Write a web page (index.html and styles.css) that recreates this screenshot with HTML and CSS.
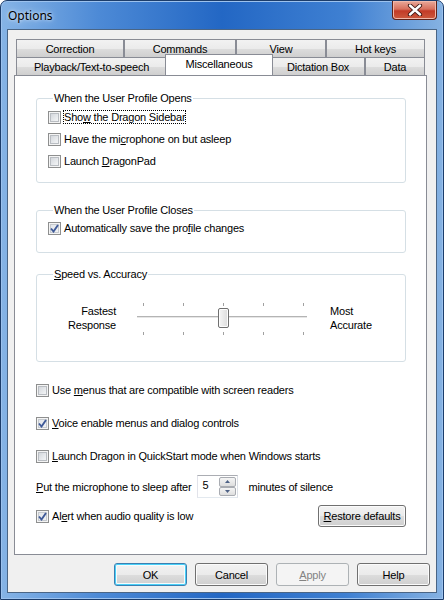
FILE: index.html
```html
<!DOCTYPE html>
<html lang="en">
<head>
<meta charset="UTF-8">
<title>Options</title>
<link rel="stylesheet" href="styles.css">
</head>
<body>
<div class="window">
  <div class="titlebar">
    <span class="title">Options</span>
    <span class="close-btn">
      <svg width="16" height="12" viewBox="0 0 16 12"><path d="M3 1.5 L13 10.5 M13 1.5 L3 10.5" stroke="#3a1410" stroke-width="4.2" stroke-linecap="round"/><path d="M3 1.5 L13 10.5 M13 1.5 L3 10.5" stroke="#fff" stroke-width="2.4" stroke-linecap="round"/></svg>
    </span>
  </div>
  <div class="client">
    <div class="tab-control">
      <div class="tab-row">
        <div class="tab" style="width:108px">Correction</div>
        <div class="tab" style="width:112px">Commands</div>
        <div class="tab" style="width:90px">View</div>
        <div class="tab" style="width:99px">Hot keys</div>
      </div>
      <div class="tab-row">
        <div class="tab" style="width:151px">Playback/Text-to-speech</div>
        <div class="tab selected" style="width:108px">Miscellaneous</div>
        <div class="tab" style="width:94px">Dictation Box</div>
        <div class="tab" style="width:60px">Data</div>
      </div>
      <div class="panel">
        <fieldset class="group group-opens">
          <legend>When the User Profile Opens</legend>
          <div class="check-row"><span class="cb"></span><span class="focus">Sho<u>w</u> the Dragon Sidebar</span></div>
          <div class="check-row"><span class="cb"></span><span>Have the mi<u>c</u>rophone on but asleep</span></div>
          <div class="check-row"><span class="cb"></span><span>Launch <u>D</u>ragonPad</span></div>
        </fieldset>
        <fieldset class="group group-closes">
          <legend>When the User Profile Closes</legend>
          <div class="check-row"><span class="cb checked"><svg width="9" height="9" viewBox="0 0 9 9"><path d="M1 4.5 L3.5 7.5 L8 1" fill="none" stroke="#3f5a98" stroke-width="1.9"/></svg></span><span>Automatically save the pro<u>f</u>ile changes</span></div>
        </fieldset>
        <fieldset class="group group-speed">
          <legend><u>S</u>peed vs. Accuracy</legend>
          <div class="slider-row">
            <div class="slider-label left">Fastest<br>Response</div>
            <div class="slider">
              <div class="ticks"><i></i><i></i><i></i><i></i><i></i></div>
              <div class="track"><span class="thumb"></span></div>
              <div class="ticks"><i></i><i></i><i></i><i></i><i></i></div>
            </div>
            <div class="slider-label">Most<br>Accurate</div>
          </div>
        </fieldset>
        <div class="check-row loose first"><span class="cb"></span><span>Use <u>m</u>enus that are compatible with screen readers</span></div>
        <div class="check-row loose"><span class="cb checked"><svg width="9" height="9" viewBox="0 0 9 9"><path d="M1 4.5 L3.5 7.5 L8 1" fill="none" stroke="#3f5a98" stroke-width="1.9"/></svg></span><span><u>V</u>oice enable menus and dialog controls</span></div>
        <div class="check-row loose"><span class="cb"></span><span><u>L</u>aunch Dragon in QuickStart mode when Windows starts</span></div>
        <div class="sleep-row">
          <span><u>P</u>ut the microphone to sleep after</span>
          <span class="spinner">
            <span class="spin-value">5</span>
            <span class="spin-buttons">
              <span class="spin-btn"><svg width="5" height="3" viewBox="0 0 5 3"><path d="M0 3 L2.5 0 L5 3Z" fill="#4d6185"/></svg></span>
              <span class="spin-btn"><svg width="5" height="3" viewBox="0 0 5 3"><path d="M0 0 L2.5 3 L5 0Z" fill="#4d6185"/></svg></span>
            </span>
          </span>
          <span>minutes of silence</span>
        </div>
        <div class="alert-row">
          <div class="check-row"><span class="cb checked"><svg width="9" height="9" viewBox="0 0 9 9"><path d="M1 4.5 L3.5 7.5 L8 1" fill="none" stroke="#3f5a98" stroke-width="1.9"/></svg></span><span>Al<u>e</u>rt when audio quality is low</span></div>
          <button class="btn restore"><u>R</u>estore defaults</button>
        </div>
      </div>
    </div>
    <div class="button-bar">
      <button class="btn default">OK</button>
      <button class="btn">Cancel</button>
      <button class="btn disabled"><u>A</u>pply</button>
      <button class="btn">Help</button>
    </div>
  </div>
</div>
</body>
</html>
```
FILE: styles.css
```css
body {
  margin: 0;
  background: #fff;
  font-family: "Liberation Sans", Arial, sans-serif;
  font-size: 11px;
  letter-spacing: -0.2px;
  color: #000;
}
u {
  text-decoration: underline;
  text-underline-offset: 1px;
}
.window {
  width: 444px;
  height: 600px;
  box-sizing: border-box;
  border: 1px solid #1c3d6b;
  border-radius: 7px 7px 0 0;
  padding: 0 6px 6px 6px;
  display: flex;
  flex-direction: column;
  background: linear-gradient(90deg, #86b4e6 0%, #4d8ad6 22%, #2367c4 50%, #3f80d2 78%, #86b2e2 100%);
  box-shadow: inset 0 0 0 1px #9cc2ee;
}
.titlebar {
  height: 28px;
  display: flex;
  justify-content: space-between;
  align-items: flex-start;
}
.title {
  font-family: "Noto Sans", "Open Sans", sans-serif;
  font-size: 12px;
  letter-spacing: 0;
  color: #000;
  margin: 6px 0 0 1px;
  text-shadow: 0 0 6px #c9dcf3, 0 0 3px #dce9f8;
}
.close-btn {
  width: 45px;
  height: 19px;
  box-sizing: border-box;
  border: 1px solid #5e2219;
  border-top: none;
  border-radius: 0 0 4px 4px;
  background: linear-gradient(#e9a99a 0%, #d7705d 45%, #c23b27 55%, #cc5a3e 100%);
  box-shadow: inset 0 0 0 1px #f0b9ab;
  display: flex;
  align-items: center;
  justify-content: center;
}
.client {
  flex: 1;
  background: #f0f0f0;
  border: 1px solid #4a6585;
  display: flex;
  flex-direction: column;
  padding: 9px 7px 0 6px;
}
.tab-control {
  display: flex;
  flex-direction: column;
}
.tab-row {
  display: flex;
  padding-left: 2px;
}
.tab {
  height: 18px;
  box-sizing: border-box;
  border: 1px solid #898c95;
  border-bottom: none;
  background: linear-gradient(#f2f2f2 0%, #ebebeb 50%, #dddddd 51%, #cfcfcf 100%);
  display: flex;
  align-items: center;
  justify-content: center;
  padding-top: 1px;
}
.tab.selected {
  position: relative;
  z-index: 1;
  background: #fff;
  height: 21px;
  margin: -3px -2px -1px -2px;
  align-items: flex-start;
  padding-top: 3px;
}
.panel {
  width: 413px;
  height: 480px;
  box-sizing: border-box;
  border: 1px solid #898c95;
  background: #fff;
  padding: 0 20px 0 21px;
  display: flex;
  flex-direction: column;
}
.group {
  margin: 0;
  border: 1px solid #d5dfe5;
  border-radius: 3px;
  padding: 0 10px 0 11px;
  min-width: 0;
}
.group legend {
  padding: 0 1px;
  margin-left: 5px;
  line-height: 13px;
}
.group-opens {
  margin-top: 16px;
  padding-top: 1px;
  padding-bottom: 10px;
}
.group-closes {
  margin-top: 21px;
  padding-top: 0;
  padding-bottom: 13px;
}
.group-speed {
  margin-top: 15px;
  padding-top: 0;
  padding-bottom: 0;
  height: 94px;
  box-sizing: border-box;
}
.check-row {
  height: 22px;
  display: flex;
  align-items: center;
  gap: 3px;
}
.check-row .focus {
  outline: 1px dotted #000;
  outline-offset: 0;
}
.cb {
  width: 13px;
  height: 13px;
  flex: none;
  box-sizing: border-box;
  border: 1px solid #8e8f8f;
  background: linear-gradient(135deg, #cbcfd5 0%, #eef0f2 70%, #f6f6f6 100%);
  box-shadow: inset 0 0 0 1px #f4f4f4, inset 0 0 0 2px #b9bdc2;
  display: flex;
  align-items: center;
  justify-content: center;
}
.cb.checked {
  background: linear-gradient(135deg, #dfe3e8 0%, #f4f5f6 100%);
  box-shadow: inset 0 0 0 1px #f4f4f4, inset 0 0 0 2px #c6cacf;
}
.slider-row {
  display: flex;
  align-items: center;
  margin-top: 20px;
}
.slider-label {
  line-height: 14px;
  flex: none;
}
.slider-label.left {
  width: 68px;
  text-align: right;
  margin-right: 21px;
}
.slider {
  width: 170px;
  flex: none;
  margin-right: 23px;
  margin-top: 2px;
  display: flex;
  flex-direction: column;
}
.ticks {
  height: 4px;
  display: flex;
  gap: 39px;
  padding-left: 6px;
}
.ticks i {
  width: 1px;
  height: 3px;
  background: #a0a0a0;
}
.ticks:last-child {
  align-items: flex-end;
}
.track {
  height: 20px;
  margin: 1px 0 3px;
  background: linear-gradient(transparent 8px, #b4b4b4 8px, #b4b4b4 9px, #e6e6e6 9px, #e6e6e6 10px, transparent 10px);
  display: flex;
}
.thumb {
  width: 11px;
  height: 20px;
  margin-left: 81px;
  box-sizing: border-box;
  border: 1px solid #707070;
  border-radius: 2px;
  background: linear-gradient(90deg, #f6f6f6, #dcdcdc);
  box-shadow: inset 0 0 0 1px #fcfcfc;
}
.check-row.loose {
  margin-top: 11px;
}
.check-row.loose.first {
  margin-top: 17px;
}
.sleep-row {
  height: 23px;
  margin-top: 8px;
  display: flex;
  align-items: center;
}
.spinner {
  width: 41px;
  height: 23px;
  box-sizing: border-box;
  margin: 0 10px 0 6px;
  border: 1px solid #abadb3;
  border-color: #abadb3 #dbdfe6 #e3e9ef #e2e3ea;
  display: flex;
  justify-content: space-between;
  padding: 1px;
}
.spin-value {
  padding: 2px 0 0 3px;
}
.spin-buttons {
  width: 17px;
  display: flex;
  flex-direction: column;
}
.spin-btn {
  flex: 1;
  box-sizing: border-box;
  border: 1px solid #a9acb2;
  border-radius: 2px;
  background: linear-gradient(#f5f5f5, #dedede);
  display: flex;
  align-items: center;
  justify-content: center;
}
.alert-row {
  margin-top: 7px;
  display: flex;
  justify-content: space-between;
  align-items: center;
}
.btn {
  font-family: "Liberation Sans", Arial, sans-serif;
  font-size: 11px;
  letter-spacing: -0.2px;
  color: #000;
  height: 23px;
  box-sizing: border-box;
  border: 1px solid #707070;
  border-radius: 3px;
  background: linear-gradient(#f2f2f2 0%, #ebebeb 50%, #dddddd 51%, #cfcfcf 100%);
  box-shadow: inset 0 0 0 1px #fbfbfb;
  padding: 0;
}
.restore {
  width: 88px;
  height: 22px;
}
.button-bar {
  display: flex;
  justify-content: flex-end;
  gap: 8px;
  padding: 8px 0 0 0;
  margin-right: -1px;
}
.button-bar .btn {
  width: 73px;
}
.btn.default {
  border-color: #3c7fb1;
  box-shadow: inset 0 0 0 1px #48d0f8, inset 0 0 0 2px #f6fbfd;
}
.btn.disabled {
  border-color: #adb2b5;
  background: #f4f4f4;
  box-shadow: none;
  color: #838383;
}
```
